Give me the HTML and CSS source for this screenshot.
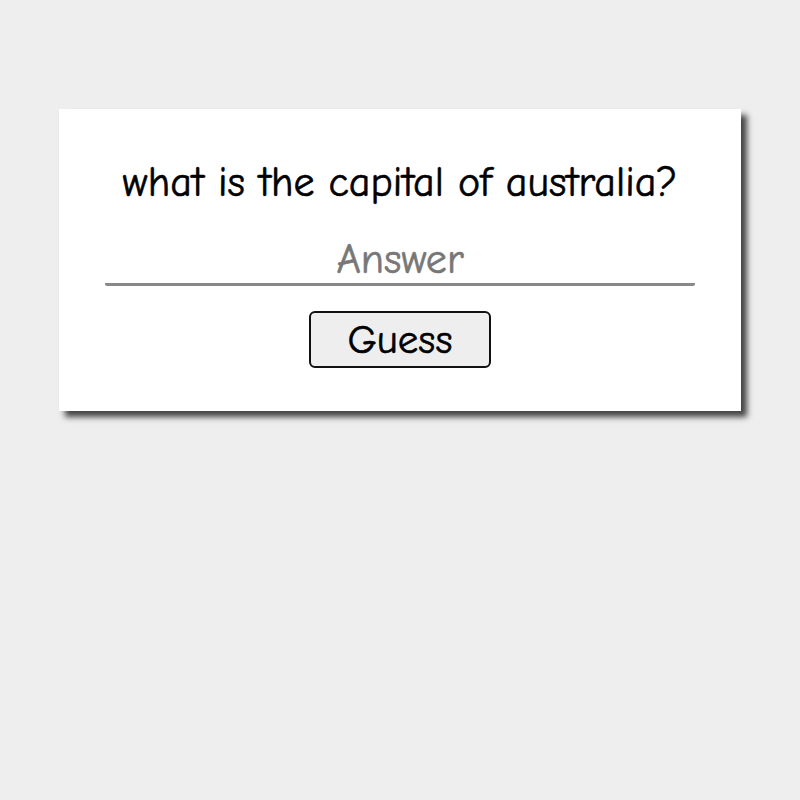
FILE: index.html
```html
<!DOCTYPE html>
<html lang="en">
<head>
    <meta charset="UTF-8">
    <meta name="viewport" content="width=device-width, initial-scale=1.0">
    <title>Quiz</title>
    <link rel="stylesheet" href="styles.css">
</head>
<body>
    <div class="quiz-card">
        <h1 class="question">what is the capital of australia?</h1>
        <form class="guess-form" onsubmit="return false;">
            <input type="text" class="answer-input" placeholder="Answer">
            <button type="submit" class="guess-button">Guess</button>
        </form>
    </div>
</body>
</html>
```

FILE: styles.css
```css
html, body {
    height: 100%;
}
body {
    box-sizing: border-box;
    font-family: "Comic Sans MS", "Comic Neue", "Lato", sans-serif;
    margin: 0;
    padding-top: 109px;
    background-color: #eeeeee;
}
.quiz-card {
    box-sizing: border-box;
    width: 682px;
    height: 302px;
    margin: 0 auto;
    padding: 50px 46px 0;
    background-color: #fff;
    box-shadow: 6px 6px 6px #444;
    text-align: center;
    -webkit-text-stroke: 0.6px currentColor;
}
.question {
    margin: 0;
    font-size: 42px;
    font-weight: normal;
    line-height: 48px;
    color: #000;
}
.guess-form {
    display: flex;
    flex-direction: column;
    align-items: center;
    margin-top: 28px;
}
.answer-input {
    box-sizing: border-box;
    width: 590px;
    height: 51px;
    padding: 0;
    font-family: inherit;
    font-size: 42px;
    text-align: center;
    border: none;
    border-bottom: 3px solid #888;
    border-radius: 2px;
    outline: none;
    background: transparent;
}
.answer-input::placeholder {
    color: #777;
}
.guess-button {
    box-sizing: border-box;
    width: 182px;
    height: 57px;
    margin-top: 25px;
    padding: 0;
    font-family: inherit;
    font-size: 41px;
    color: #000;
    background-color: #eeeeee;
    border: 2px solid #111;
    border-radius: 6px;
    cursor: pointer;
}
```
